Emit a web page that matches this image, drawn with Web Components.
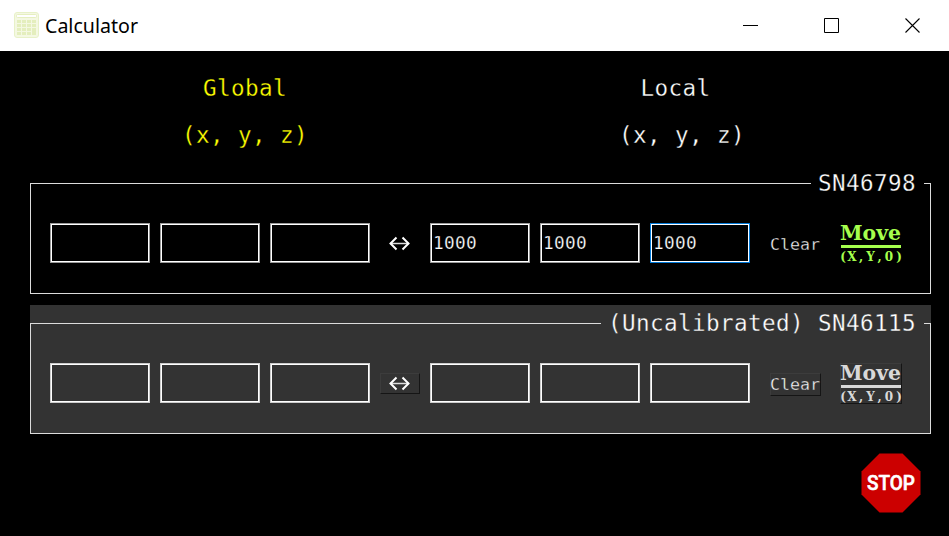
<!DOCTYPE html>
<html lang="en"><head><meta charset="utf-8"><title>Calculator</title>
<style>html,body{margin:0;width:949px;height:536px;overflow:hidden;background:#000}</style></head>
<body><calc-window></calc-window>
<script>
const define = (name, html, init) => customElements.define(name, class extends HTMLElement {
  constructor() {
    super();
    const t = document.createElement('template');
    t.innerHTML = html;
    this.attachShadow({mode: 'open'}).append(t.content.cloneNode(true));
  }
  connectedCallback() { if (init) init(this, this.shadowRoot); }
});

define('title-bar', `<style>
:host{display:flex;height:51px;background:#fff;color:#000;align-items:center;font:20px/28px "Noto Sans",sans-serif}
.icon{margin-left:14px;margin-top:-1px;width:25px;height:26px}
.title{margin-left:6px;flex:1;padding-top:2px}
.ctl{width:81px;height:51px;display:block}
.title text{font-size:20.6px}
</style>
<svg class="icon" viewBox="0 0 25 26"><rect x=".5" y=".5" width="24" height="25" rx="2.5" fill="#f4f8e2" stroke="#e8f1c8"/><rect x="2.500" y="2.500" width="20" height="3" rx="1" fill="#fff" stroke="#e6efc0"/>
<g fill="#e4eebd"><path d="M3 8h4v3H3zM8 8h4v3H8zM13 8h4v3h-4zM18 8h4v3h-4zM3 12h4v3H3zM8 12h4v3H8zM13 12h4v3h-4zM18 12h4v3h-4zM3 16h4v3H3zM8 16h4v3H8zM13 16h4v3h-4zM18 16h4v7h-4zM3 20h4v3H3zM8 20h4v3H8zM13 20h4v3h-4z"/></g></svg>
<svg class="title" height="28"><text x="0" y="20" textLength="93" lengthAdjust="spacingAndGlyphs">Calculator</text></svg>
<svg class="ctl"><path d="M37 25.5h15" stroke="#000" fill="none"/></svg>
<svg class="ctl"><path d="M37.500 18.500h14v14h-14z" stroke="#000" fill="none"/></svg>
<svg class="ctl"><path d="M37.500 18.500l14 14M51.500 18.500l-14 14" stroke="#000" stroke-width="1.1" fill="none"/></svg>`);

define('coord-heading', `<style>
:host{display:block;text-align:center;white-space:pre;font:22.6px/47px "DejaVu Sans Mono",monospace;letter-spacing:.394px;-webkit-text-stroke:.3px #000}
div{height:47px}
</style><div><slot name="name"></slot></div><div>(x, y, z)</div>`);

define('coord-input', `<style>
:host{display:block;box-sizing:border-box;width:100px;height:40px;border:1px solid var(--edge,#999);box-shadow:inset 0 0 0 1px #fff;padding-left:2px;color:#fff;font:17.8px/38px "DejaVu Sans Mono",monospace;letter-spacing:.284px;-webkit-text-stroke:.25px #000}
:host([focused]){--edge:#0078d7}
</style><slot></slot>`);

define('flat-button', `<style>
:host{display:block;box-sizing:border-box;color:#fff;border:1px solid;border-color:var(--hi,transparent) var(--lo,transparent) var(--lo,transparent) var(--hi,transparent)}
</style><slot></slot>`);

define('stage-panel', `<style>
:host{display:block;box-sizing:border-box;position:relative;width:901px;height:129px;padding-top:18px;background:var(--panel);--panel:#000;--move:#a6ff4d}
:host([disabled]){--panel:#333;--move:#d9d9d9;--edge:#ccc;--hi:#3c3c3c;--lo:#151515}
.frame{box-sizing:border-box;height:111px;border:1px solid #dcdcdc;padding:39px 19px 0}
.label{position:absolute;right:7px;top:0;height:36px;padding:0 8px 0 7px;background:var(--panel);color:#fff;white-space:pre;font:22.6px/36px "DejaVu Sans Mono",monospace;letter-spacing:.394px;-webkit-text-stroke:.3px var(--panel)}
.row{display:grid;grid-template-columns:repeat(3,100px) 40px repeat(3,100px) 51px 62px;column-gap:10px;align-items:center;height:40px;margin-top:-1px}
coord-input{-webkit-text-stroke-color:var(--panel)}
.swap{width:40px;height:21px}.swap svg{display:block}
.clear{margin:2px 0 0 10px;width:51px;height:23px;font:16px/21px "DejaVu Sans Mono",monospace}
.clear svg,.move svg{display:block;overflow:visible}
.move{margin:1px 0 0 19px;width:62px;height:41px}
</style>
<div class="frame"><div class="row">
<coord-input></coord-input><coord-input></coord-input><coord-input></coord-input>
<flat-button class="swap"><svg width="38" height="19"><path d="M9 9.500h19" stroke="#ddd" stroke-width="1.500"/><path d="M15.500 3.500l-6 6 6 6M21.500 3.500l6 6-6 6" fill="none" stroke="#fff" stroke-width="2"/></svg></flat-button>
<coord-input class="l"></coord-input><coord-input class="l"></coord-input><coord-input class="l"></coord-input>
<flat-button class="clear"><svg width="49" height="21"><text x="-1" y="15.500" font-size="15.500" textLength="50" lengthAdjust="spacingAndGlyphs" fill="#fff" stroke="var(--panel)" stroke-width=".35">Clear</text></svg></flat-button>
<flat-button class="move"><svg width="60" height="39" font-family="DejaVu Serif,serif" font-weight="bold" fill="var(--move)"><text x="-1" y="16" font-size="19.500" textLength="61" lengthAdjust="spacingAndGlyphs">Move</text><rect x="0" y="21" width="60" height="3"/><text x="2 11 20 29.500 38.500 48 58" y="37" font-size="12" text-anchor="middle">(X,Y,0)</text></svg></flat-button>
</div></div><div class="label"></div>`, (h, r) => {
  r.querySelector('.label').textContent = h.getAttribute('label');
  const v = h.getAttribute('value');
  if (v) r.querySelectorAll('.l').forEach(e => e.textContent = v);
  if (v) r.querySelectorAll('.l')[2].setAttribute('focused', '');
});

define('stop-button', `<style>:host{display:block;width:60px;height:60px}svg{display:block;overflow:visible}</style>
<svg width="60" height="60"><path d="M18.500.5h23l18 18v23l-18 18h-23l-18-18v-23z" fill="#c00"/><text x="6" y="37" font-family="Roboto,sans-serif" font-weight="500" font-size="21" fill="#fff" stroke="#fff" stroke-width=".6" stroke-linejoin="round" textLength="48" lengthAdjust="spacingAndGlyphs">STOP</text></svg>`);

define('calc-window', `<style>
:host{display:flex;flex-direction:column;width:949px;height:536px;background:#000}
.heads{display:grid;grid-template-columns:320px 320px;column-gap:117px;padding:14px 0 0 85px;height:100px}
.panels{display:grid;row-gap:11px;padding-left:30px}
.local{margin-right:13px}
stop-button{margin:19px 28px 0 auto}
</style><title-bar></title-bar>
<div class="heads"><coord-heading style="color:#ff0"><span slot="name">Global</span></coord-heading><coord-heading style="color:#fff"><span slot="name" class="local">Local</span></coord-heading></div>
<div class="panels"><stage-panel label="SN46798" value="1000"></stage-panel><stage-panel disabled label="(Uncalibrated) SN46115"></stage-panel></div>
<stop-button></stop-button>`);
</script></body></html>
